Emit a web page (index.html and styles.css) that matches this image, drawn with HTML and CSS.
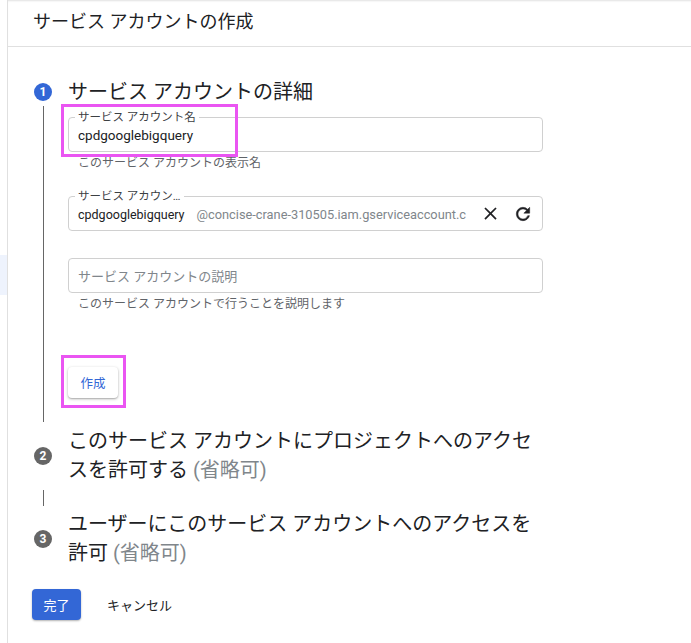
FILE: index.html
```html
<!DOCTYPE html>
<html lang="ja">
<head>
<meta charset="utf-8">
<link rel="stylesheet" href="styles.css">
</head>
<body>
<div class="layout">
  <div class="rail"><div class="rail-hl"></div></div>
  <div class="main">
    <div class="header">サービス アカウントの作成</div>
    <div class="steps">
      <div class="step step-active">
        <div class="num num-blue">1</div>
        <div class="title">サービス アカウントの詳細</div>
        <div class="vline"></div>
        <div class="content">
          <div class="field f1">
            <span class="flabel">サービス アカウント名</span>
            <span class="fval">cpdgooglebigquery</span>
            <div class="mark mark1"></div>
          </div>
          <div class="helper">このサービス アカウントの表示名</div>
          <div class="field f2">
            <span class="flabel">サービス アカウン…</span>
            <div class="idrow">
              <span class="fval fval-sm">cpdgooglebigquery</span>
              <span class="suffix">@concise-crane-310505.iam.gserviceaccount.c</span>
            </div>
            <svg class="ico ico-x" viewBox="0 0 24 24"><path d="M19 6.41 17.59 5 12 10.59 6.41 5 5 6.41 10.59 12 5 17.59 6.41 19 12 13.41 17.59 19 19 17.59 13.41 12z"/></svg>
            <svg class="ico ico-r" viewBox="0 0 24 24"><path d="M17.65 6.35A7.958 7.958 0 0 0 12 4c-4.42 0-7.99 3.58-7.99 8s3.57 8 7.99 8c3.73 0 6.84-2.55 7.73-6h-2.08A5.99 5.99 0 0 1 12 18c-3.31 0-6-2.69-6-6s2.69-6 6-6c1.66 0 3.14.69 4.22 1.78L13 11h7V4l-2.35 2.35z"/></svg>
          </div>
          <div class="field f3">
            <span class="placeholder">サービス アカウントの説明</span>
          </div>
          <div class="helper">このサービス アカウントで行うことを説明します</div>
          <div class="btn-wrap">
            <button class="btn-create">作成</button>
            <div class="mark mark2"></div>
          </div>
        </div>
      </div>
      <div class="step step-row">
        <div class="num num-gray">2</div>
        <div class="title">このサービス アカウントにプロジェクトへのアクセ<br>スを許可する <span class="opt">(省略可)</span></div>
      </div>
      <div class="connector"><div class="cline"></div></div>
      <div class="step step-row step-last">
        <div class="num num-gray">3</div>
        <div class="title">ユーザーにこのサービス アカウントへのアクセスを<br>許可 <span class="opt">(省略可)</span></div>
      </div>
    </div>
    <div class="actions">
      <button class="btn-done">完了</button>
      <button class="btn-cancel">キャンセル</button>
    </div>
  </div>
</div>
</body>
</html>
```

FILE: styles.css
```css
* { box-sizing: border-box; }
html, body { margin: 0; padding: 0; background: #fff; }
body {
  font-family: Roboto, "Noto Sans CJK JP", sans-serif;
  color: #202124;
  width: 691px;
  height: 643px;
  overflow: hidden;
}
.layout { display: flex; min-height: 643px; }
.rail {
  width: 8px;
  flex: none;
  border-right: 1px solid #e0e0e0;
  padding-top: 255px;
}
.rail-hl { height: 40px; background: #eef3fd; }
.main { flex: 1; min-width: 0; }
.header {
  height: 47px;
  border-bottom: 1px solid #e0e0e0;
  box-shadow: inset 0 2px 2px -1px rgba(0,0,0,0.12);
  padding-left: 25px;
  padding-top: 9px;
  font-size: 18px;
  line-height: 26px;
}
.steps { padding-left: 26px; padding-top: 31px; }
.step {
  display: grid;
  grid-template-columns: 18px 1fr;
  column-gap: 16px;
}
.num {
  width: 18px; height: 18px;
  border-radius: 50%;
  color: #fff;
  font-size: 12px;
  font-weight: 700;
  display: flex; align-items: center; justify-content: center;
  align-self: center;
}
.num-blue { background: #3367d6; }
.num-gray { background: #666; }
.title { font-size: 20px; line-height: 28px; }
.step-row .title { line-height: 29px; }
.opt { color: #80868b; }
.vline { width: 1px; background: #666; justify-self: center; }
.content { padding-top: 11px; padding-bottom: 24px; width: 475px; }
.field {
  position: relative;
  height: 35px;
  border: 1px solid #d0d0d0;
  border-radius: 4px;
  display: flex;
  align-items: center;
  padding-left: 9px;
}
.flabel {
  position: absolute;
  left: 6px; top: -8px;
  background: #fff;
  padding: 0 3px;
  font-size: 11.5px;
  line-height: 14px;
  color: #3c4043;
}
.fval { font-size: 13.5px; padding-top: 1px; }
.fval-sm { font-size: 12.5px; }
.idrow {
  display: flex; gap: 12px; align-items: center;
  width: 396px; white-space: nowrap;
  padding-top: 1px;
}
.suffix { color: #80868b; font-size: 12.8px; }
.ico { width: 20px; height: 20px; fill: #202124; flex: none; }
.ico-x { margin-left: 6px; width: 21px; height: 21px; }
.ico-r { margin-left: 12px; stroke: #202124; stroke-width: 0.6; }
.placeholder { color: #80868b; font-size: 13px; }
.helper { font-size: 12px; line-height: 16px; color: #5f6368; margin-top: 3px; padding-left: 10px; }
.f2 { margin-top: 25px; }
.f3 { margin-top: 27px; }
.mark { position: absolute; border: 3px solid #ea55f2; pointer-events: none; }
.mark1 { left: -8px; top: -14px; width: 177px; height: 53px; }
.btn-wrap { position: relative; margin-top: 55px; width: 50px; }
.mark2 { left: -7px; top: -12px; width: 65px; height: 53px; }
.btn-create {
  width: 50px; height: 31px;
  border: none; border-radius: 4px;
  background: #fff;
  color: #3367d6;
  font-family: inherit;
  font-size: 12.5px;
  box-shadow: 0 1px 3px rgba(0,0,0,0.3), 0 1px 1px rgba(0,0,0,0.1);
  padding: 0;
}
.step-row { padding-top: 5px; }
.step-last { padding-top: 2px; }
.connector {
  width: 18px;
  display: flex; justify-content: center;
  padding: 5px 0 2px;
}
.cline { width: 1px; height: 16px; background: #666; }
.actions { padding-left: 24px; margin-top: 21px; display: flex; align-items: center; gap: 8px; }
.btn-done {
  width: 49px; height: 31px;
  border: none; border-radius: 4px;
  background: #3367d6; color: #fff;
  font-family: inherit; font-size: 13px;
  box-shadow: 0 1px 2px rgba(0,0,0,0.3);
  padding: 0;
}
.btn-cancel {
  border: none; background: none;
  font-family: inherit; font-size: 13px; color: #202124;
  padding: 0 18px;
  height: 31px;
}
```
